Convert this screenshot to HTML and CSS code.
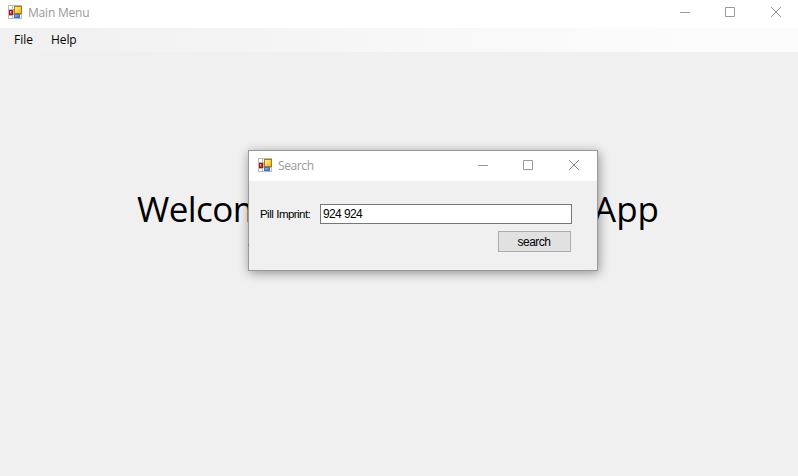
FILE: index.html
```html
<!DOCTYPE html>
<html lang="en">
<head>
<meta charset="utf-8">
<title>Main Menu</title>
<link rel="stylesheet" href="styles.css">
</head>
<body>
<svg width="0" height="0" class="defs">
  <defs>
    <linearGradient id="gold" x2="1" y2="1"><stop offset="0" stop-color="#fff0a0"/><stop offset="1" stop-color="#f0b50e"/></linearGradient>
    <linearGradient id="blue" x2="1" y2="1"><stop offset="0" stop-color="#94c2fa"/><stop offset="1" stop-color="#2f6cdb"/></linearGradient>
    <symbol id="app" viewBox="0 0 14 14">
      <path fill="#b9b9b9" d="M0 0h14v14H0z"/>
      <path fill="#fff" d="M1 1h3v3H1zM5 1h1v3H5zM1 11h3v2H1zM5 10h1v3H5zM12 10h1v3h-1z"/>
      <path fill="#a51414" d="M1 5h4v5H1z"/><path fill="#d8372e" d="M2 6h2v3H2z"/><path fill="#f2aaa0" d="M2 6h1v2H2z"/>
      <path fill="#a97b0b" d="M6 1h8v8H6z"/><path fill="url(#gold)" d="M7 2h6v6H7z"/>
      <path fill="#3b70cd" d="M6 9h6v4H6z"/><path fill="url(#blue)" d="M7 10h4v2H7z"/>
    </symbol>
    <symbol id="min" viewBox="0 0 11 11"><path d="M0 5.5h10" fill="none" stroke="#999"/></symbol>
    <symbol id="max" viewBox="0 0 11 11"><path d="M.5.5h9v9h-9z" fill="none" stroke="#999"/></symbol>
    <symbol id="close" viewBox="0 0 11 11"><path d="M.2.2l9.6 9.6M9.8.2L.2 9.8" fill="none" stroke="#8c8c8c"/></symbol>
  </defs>
</svg>
<main class="window">
  <header class="titlebar">
    <svg class="app-icon"><use href="#app"/></svg><span class="title">Main Menu</span>
    <div class="controls"><svg><use href="#min"/></svg><svg><use href="#max"/></svg><svg><use href="#close"/></svg></div>
  </header>
  <nav class="menu"><span class="file">File</span><span class="help">Help</span></nav>
  <h1 class="welcome"><span class="start">Welcom</span><span>App</span></h1>
  <section class="dialog">
    <header class="titlebar">
      <svg class="app-icon"><use href="#app"/></svg><span class="title">Search</span>
      <div class="controls"><svg><use href="#min"/></svg><svg><use href="#max"/></svg><svg><use href="#close"/></svg></div>
    </header>
    <form class="form">
      <div class="row"><label for="imprint">Pill Imprint:</label><input id="imprint" value="924 924"></div>
      <button type="button">search</button>
    </form>
    <i class="speck"></i>
  </section>
</main>
</body>
</html>
```
FILE: styles.css
```css
* { box-sizing: border-box; }
body { margin: 0; overflow: hidden; }
.defs { position: absolute; }
.window { position: relative; width: 798px; height: 476px; background: #f0f0f0; font: 12px/16px "Open Sans", sans-serif; }
.titlebar { display: flex; height: 28px; padding: 5px 16px 0 8px; background: #fff; color: #999; }
.app-icon { width: 14px; height: 14px; flex: none; }
.title { margin-left: 6px; letter-spacing: -.2px; }
.controls { display: flex; gap: 34px; margin: 2px 0 0 auto; }
.controls svg { width: 11px; height: 11px; }
.controls svg + svg + svg { margin-left: 1px; }
.menu { display: flex; height: 24px; padding: 4px 14px; background: linear-gradient(90deg, #f0f0f0, #fcfcfc 85%); color: #000; }
.file { width: 37px; }
.help { letter-spacing: -.1px; }
.welcome { display: flex; justify-content: space-between; margin: 133px 139px 0 137px; font-size: 35px; font-weight: 400; line-height: 48px; color: #000; }
.start { letter-spacing: -.6px; }
.dialog { position: absolute; left: 248px; top: 150px; width: 350px; height: 121px; border: 1px solid #999; background: #f0f0f0; box-shadow: 1px 2px 10px rgba(0,0,0,.4); }
.dialog .titlebar { height: 30px; padding: 7px 17px 0 9px; }
.dialog .title { letter-spacing: -.4px; }
.form { padding: 23px 25px 0 11px; font: 12px/18px "Liberation Sans", sans-serif; color: #000; }
.row { display: flex; }
.row label { width: 60px; font-size: 11.5px; letter-spacing: -.55px; word-spacing: .5px; line-height: 20px; white-space: nowrap; }
input { width: 252px; height: 20px; padding: 0 2px; border: 1px solid #777; border-radius: 0; background: #fff; color: #000; font: 12px "Liberation Sans", sans-serif; letter-spacing: -.65px; word-spacing: .3px; }
button { display: block; width: 73px; height: 21px; margin: 7px 1px 0 auto; padding: 0 1px 0 0; border: 1px solid #adadad; border-radius: 0; background: #e1e1e1; color: #000; font: 12px "Liberation Sans", sans-serif; letter-spacing: -.5px; }
.speck { position: absolute; left: -1px; top: 93px; width: 1px; height: 2px; background: #b87832; }
```
